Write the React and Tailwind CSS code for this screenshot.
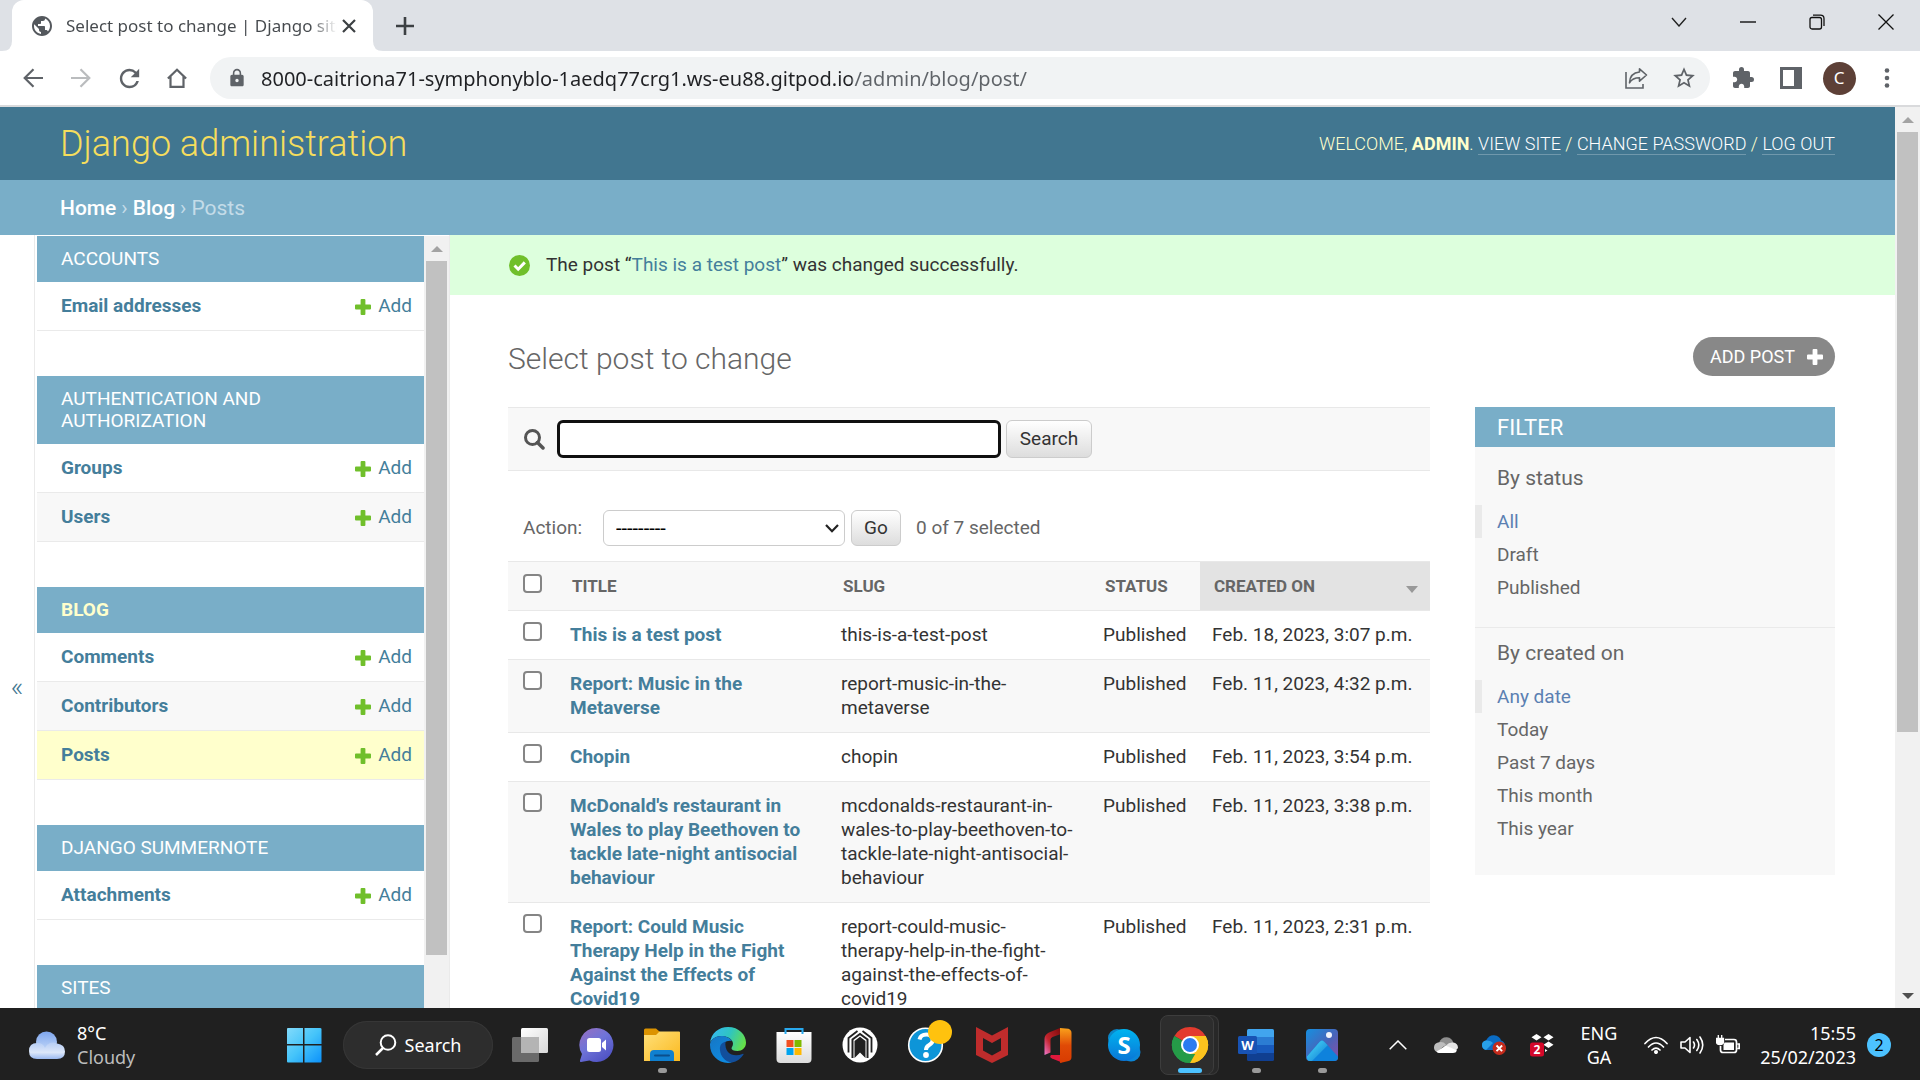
import React from "react";
import { MdExtension, MdStarBorder, MdLock, MdPublic, MdRefresh } from "react-icons/md";

const sections = [
  { name: "Accounts", items: [{ name: "Email addresses" }] },
  { name: "Authentication and Authorization", items: [{ name: "Groups" }, { name: "Users", alt: true }] },
  {
    name: "Blog",
    current: true,
    items: [{ name: "Comments" }, { name: "Contributors", alt: true }, { name: "Posts", current: true }],
  },
  { name: "Django Summernote", items: [{ name: "Attachments" }] },
  { name: "Sites", items: [] },
];

const posts = [
  ["This is a test post", "this-is-a-test-post", "Feb. 18, 2023, 3:07 p.m."],
  ["Report: Music in the Metaverse", "report-music-in-the-metaverse", "Feb. 11, 2023, 4:32 p.m."],
  ["Chopin", "chopin", "Feb. 11, 2023, 3:54 p.m."],
  [
    "McDonald's restaurant in Wales to play Beethoven to tackle late-night antisocial behaviour",
    "mcdonalds-restaurant-in-wales-to-play-beethoven-to-tackle-late-night-antisocial-behaviour",
    "Feb. 11, 2023, 3:38 p.m.",
  ],
  [
    "Report: Could Music Therapy Help in the Fight Against the Effects of Covid19",
    "report-could-music-therapy-help-in-the-fight-against-the-effects-of-covid19",
    "Feb. 11, 2023, 2:31 p.m.",
  ],
];

function Plus({ className }) {
  return (
    <svg viewBox="0 0 16 16" className={className} fill="currentColor" aria-hidden="true">
      <path d="M6.6 0h2.8q1 0 1 1v4.600H15q1 0 1 1v2.800q0 1-1 1h-4.600V15q0 1-1 1H6.600q-1 0-1-1v-4.600H1q-1 0-1-1V6.600q0-1 1-1h4.600V1q0-1 1-1z" />
    </svg>
  );
}

function IconButton({ label, className = "w-12", children }) {
  return (
    <button type="button" aria-label={label} className={`flex h-full shrink-0 items-center justify-center ${className}`}>
      {children}
    </button>
  );
}

function TabStrip() {
  return (
    <div className="flex h-[51px] shrink-0 bg-[#dee1e6] pl-3">
      <div className="relative flex w-[361px] items-center rounded-t-xl bg-white pl-[18px] pr-3">
        <svg viewBox="0 0 10 10" className="absolute bottom-0 -left-2.5 size-2.5 fill-white" aria-hidden="true">
          <path d="M10 0v10H0Q10 10 10 0z" />
        </svg>
        <svg viewBox="0 0 10 10" className="absolute -right-2.5 bottom-0 size-2.5 fill-white" aria-hidden="true">
          <path d="M0 0v10h10Q0 10 0 0z" />
        </svg>
        <MdPublic className="size-6 shrink-0 text-[#54585d]" />
        <span className="ml-3 flex-1 overflow-hidden whitespace-nowrap bg-[linear-gradient(to_right,#45494d_90%,transparent)] bg-clip-text text-[17px] text-transparent">
          Select post to change | Django site
        </span>
        <button type="button" aria-label="Close tab" className="flex size-6 items-center justify-center">
          <svg viewBox="0 0 14 14" className="size-3.5" stroke="#3c4043" strokeWidth="2.200" aria-hidden="true">
            <path d="M1 1l12 12M13 1L1 13" />
          </svg>
        </button>
      </div>
      <IconButton label="New tab" className="ml-2 w-12">
        <svg viewBox="0 0 18 18" className="size-[18px]" stroke="#3c4043" strokeWidth="2.600" aria-hidden="true">
          <path d="M9 0v18M0 9h18" />
        </svg>
      </IconButton>
      <div className="ml-auto flex h-[43px]">
        <IconButton label="Search tabs" className="w-[69px]">
          <svg viewBox="0 0 16 10" className="h-2.5 w-4" fill="none" stroke="#222" strokeWidth="1.400">
            <path d="M1 1l7 8 7-8" />
          </svg>
        </IconButton>
        <IconButton label="Minimize" className="w-[69px]">
          <svg viewBox="0 0 16 2" className="h-0.5 w-4" stroke="#000" strokeWidth="1.300">
            <path d="M0 1h16" />
          </svg>
        </IconButton>
        <IconButton label="Restore" className="w-[69px]">
          <svg viewBox="0 0 16 16" className="size-4" fill="none" stroke="#111" strokeWidth="1.300">
            <rect x="1" y="3.500" width="11.500" height="11.500" rx="2" />
            <path d="M4 1.200h7.500q3.500 0 3.500 3.500V12" />
          </svg>
        </IconButton>
        <IconButton label="Close" className="w-[69px]">
          <svg viewBox="0 0 16 16" className="size-4" stroke="#111" strokeWidth="1.300">
            <path d="M.5.5l15 15M15.500.5l-15 15" />
          </svg>
        </IconButton>
      </div>
    </div>
  );
}

function AddressBar() {
  return (
    <div className="flex h-14 shrink-0 items-center border-b-2 border-[#d9dadc] bg-white px-[9px]">
      <IconButton label="Back">
        <svg viewBox="0 0 20 20" className="size-5" fill="none" stroke="#5f6368" strokeWidth="2.200">
          <path d="M20 10H2M10.500 1.200L1.700 10l8.800 8.800" />
        </svg>
      </IconButton>
      <IconButton label="Forward">
        <svg viewBox="0 0 20 20" className="size-5" fill="none" stroke="#babcbe" strokeWidth="2.200">
          <path d="M0 10h18M9.500 1.200l8.800 8.800-8.800 8.800" />
        </svg>
      </IconButton>
      <IconButton label="Reload">
        <MdRefresh className="size-[29px] text-[#5f6368]" />
      </IconButton>
      <IconButton label="Home">
        <svg viewBox="0 0 20 20" className="size-5" fill="none" stroke="#5f6368" strokeWidth="2.200">
          <path d="M.9 10.500L10 1.700l9.100 8.800M3.500 8.500v10.300h13V8.500" />
        </svg>
      </IconButton>
      <div className="ml-[9px] flex h-[42px] flex-1 items-center rounded-full bg-[#f1f3f4] pl-[17px] pr-0.5">
        <MdLock className="size-5 shrink-0 text-[#5f6368]" />
        <input
          type="text"
          aria-label="Address and search bar"
          defaultValue="8000-caitriona71-symphonyblo-1aedq77crg1.ws-eu88.gitpod.io/admin/blog/post/"
          className="ml-3.5 h-full min-w-0 flex-1 bg-[linear-gradient(to_right,#202124_591px,#5f6368_591px)] bg-clip-text text-[20px] text-transparent outline-none"
        />
        <IconButton label="Share">
          <svg viewBox="0 0 24 22" className="h-[22px] w-6" fill="none" stroke="#5f6368" strokeWidth="1.600">
            <path d="M2 5v16h17v-4" />
            <path d="M15.500 1.800l7 6.200-7 6.200v-3.400q-7 0-10 5Q6 5.800 15.500 5z" strokeLinejoin="round" />
          </svg>
        </IconButton>
        <IconButton label="Bookmark this page">
          <MdStarBorder className="size-[26px] text-[#5f6368]" />
        </IconButton>
      </div>
      <IconButton label="Extensions" className="ml-[9px] w-12">
        <MdExtension className="size-6 text-[#5f6368]" />
      </IconButton>
      <IconButton label="Side panel">
        <span className="block size-[22px] border-[3px] border-r-8 border-[#5f6368]" />
      </IconButton>
      <IconButton label="Profile">
        <span className="flex size-[33px] items-center justify-center rounded-full bg-[#5d4037] text-[17px] text-white">C</span>
      </IconButton>
      <IconButton label="Menu">
        <svg viewBox="0 0 6 20" className="h-5 w-1.5 fill-[#5f6368]">
          <circle cx="3" cy="2.500" r="2.300" />
          <circle cx="3" cy="10" r="2.300" />
          <circle cx="3" cy="17.500" r="2.300" />
        </svg>
      </IconButton>
    </div>
  );
}

function SiteHeader() {
  return (
    <header>
      <div className="flex h-[73px] items-center justify-between bg-[#417690] px-[60px]">
        <a href="#admin" className="text-[36px] font-light leading-[44px] text-[#f5dd5d]">
          Django administration
        </a>
        <div className="text-[18px] font-light leading-[22px] text-[#ffffcc]">
          WELCOME, <strong className="font-bold">ADMIN</strong>.{" "}
          <a href="#site" className="border-b border-white/25 text-white">VIEW SITE</a> /{" "}
          <a href="#password" className="border-b border-white/25 text-white">CHANGE PASSWORD</a> /{" "}
          <a href="#logout" className="border-b border-white/25 text-white">LOG OUT</a>
        </div>
      </div>
      <nav aria-label="Breadcrumbs" className="flex h-[55px] items-center gap-[5px] bg-[#79aec8] px-[60px] pt-0.5 text-[21px] text-[#c4dce8]">
        <a href="#home" className="font-medium text-white">Home</a>
        <span>›</span>
        <a href="#blog" className="font-medium text-white">Blog</a>
        <span>›</span>
        <span>Posts</span>
      </nav>
    </header>
  );
}

function Sidebar() {
  return (
    <aside className="flex h-[calc(100vh-179px)] w-[450px] shrink-0 border-r border-[#eaeaea]">
      <button
        type="button"
        aria-label="Toggle navigation"
        className="w-[35px] shrink-0 border-r border-[#eaeaea] pt-0.5 text-[28px] font-light text-[#417690]"
      >
        «
      </button>
      <nav aria-label="Models" className="ml-0.5 mt-px min-w-0 flex-1 overflow-hidden">
        {sections.map((s) => (
          <section key={s.name} className="mb-[45px]">
            <h2
              className={`bg-[#79aec8] py-3 pl-6 pr-36 text-[19px] uppercase leading-[22px] ${
                s.current ? "font-bold text-[#ffffcc]" : "font-normal text-white"
              }`}
            >
              {s.name}
            </h2>
            {s.items.map((i) => (
              <div
                key={i.name}
                className={`flex h-[49px] items-center border-b border-[#eaeaea] pl-6 pr-3 pt-px text-[19px] ${
                  i.current ? "bg-[#ffffcc]" : i.alt ? "bg-[#f8f8f8]" : "bg-white"
                }`}
              >
                <a href={`#${i.name}`} className="font-bold text-[#447e9b]">{i.name}</a>
                <a href={`#add-${i.name}`} className="ml-auto flex items-center gap-[7px] text-[#447e9b]">
                  <Plus className="size-4 text-[#70bf2b]" />
                  Add
                </a>
              </div>
            ))}
          </section>
        ))}
      </nav>
      <div className="mt-px flex w-[25px] shrink-0 flex-col items-center bg-[#f1f1f1]">
        <span className="flex h-[25px] items-center">
          <svg viewBox="0 0 12 6" className="h-1.5 w-3 fill-[#a3a3a3]"><path d="M0 6l6-6 6 6z" /></svg>
        </span>
        <span className="h-[694px] w-[21px] bg-[#c1c1c1]" />
      </div>
    </aside>
  );
}

function CheckBox({ label }) {
  return (
    <input
      type="checkbox"
      aria-label={label}
      className="block size-[19px] appearance-none rounded-[4px] border-2 border-[#858585] bg-white checked:bg-[#417690]"
    />
  );
}

function ChangeList() {
  const btn =
    "rounded-md border border-[#cccccc] bg-linear-to-b from-white to-[#dddddd] text-[19px] text-[#333333]";
  return (
    <div className="min-w-0 flex-1">
      <form className="flex h-16 items-center border-y border-[#e8e8e8] bg-[#f8f8f8] pl-4" onSubmit={(e) => e.preventDefault()}>
        <label htmlFor="searchbar" className="mr-3" aria-label="Search posts">
          <svg viewBox="0 0 21 21" className="size-[21px]" fill="none" stroke="#555" strokeWidth="3" aria-hidden="true">
            <circle cx="8.500" cy="8.500" r="7" />
            <path d="M13.500 13.500l5.500 5.500" strokeWidth="3.500" strokeLinecap="round" />
          </svg>
        </label>
        <input id="searchbar" type="text" className="h-[38px] w-[444px] rounded-md border-[3px] border-[#101010] bg-white px-2 text-[19px] outline-none" />
        <button type="submit" className={`${btn} ml-[5px] h-[38px] w-[86px]`}>Search</button>
      </form>

      <div className="flex items-center pb-[15px] pl-[15px] pt-[39px] text-[19px] text-[#666666]">
        <label htmlFor="action" className="w-20">Action:</label>
        <div className="relative">
          <select id="action" className="h-9 w-[242px] appearance-none rounded-md border border-[#cccccc] bg-white px-3 text-[20px] text-black">
            <option>---------</option>
            <option>Delete selected posts</option>
          </select>
          <svg viewBox="0 0 14 9" className="pointer-events-none absolute right-1.5 top-3.5 h-[9px] w-3.5" fill="none" stroke="#222" strokeWidth="2.200">
            <path d="M1 1l6 6.200L13 1" />
          </svg>
        </div>
        <button type="button" className={`${btn} ml-1.5 h-9 w-[50px]`}>Go</button>
        <span className="ml-[15px]">0 of 7 selected</span>
      </div>

      <table className="w-full table-fixed border-collapse text-left text-[19px] leading-6 text-[#333333]">
        <colgroup>
          <col className="w-[50px]" />
          <col />
          <col className="w-[262px]" />
          <col className="w-[109px]" />
          <col className="w-[230px]" />
        </colgroup>
        <thead>
          <tr className="h-[49px] border-y border-[#e8e8e8] bg-[#f8f8f8] text-[17px] uppercase text-[#666666]">
            <th className="pb-1.5 pl-[15px]"><CheckBox label="Select all posts" /></th>
            <th className="pl-3.5"><a href="#sort-title">Title</a></th>
            <th className="pl-3.5"><a href="#sort-slug">Slug</a></th>
            <th className="pl-3.5"><a href="#sort-status">Status</a></th>
            <th className="bg-[#e3e3e3] pl-3.5 pr-3">
              <a href="#sort-created" className="flex items-center justify-between whitespace-nowrap">
                Created on
                <svg viewBox="0 0 12 7" className="mt-1.5 h-[7px] w-3 fill-[#999]"><path d="M0 0h12L6 7z" /></svg>
              </a>
            </th>
          </tr>
        </thead>
        <tbody>
          {posts.map(([title, slug, date]) => (
            <tr key={title} className="border-b border-[#e8e8e8] align-top odd:bg-white even:bg-[#f8f8f8]">
              <td className="pl-[15px] pt-[11px]"><CheckBox label={`Select ${title}`} /></td>
              <th scope="row" className="p-3"><a href={`#${slug}`} className="text-[#447e9b]">{title}</a></th>
              <td className="py-3 pl-3 pr-[18px]">{slug}</td>
              <td className="py-3 pl-3">Published</td>
              <td className="whitespace-nowrap py-3 pl-3">{date}</td>
            </tr>
          ))}
        </tbody>
      </table>
    </div>
  );
}

function FilterGroup({ title, options, className }) {
  return (
    <div className={className}>
      <h3 className="mb-[14px] px-[22px] text-[21px] leading-[26px] text-[#666666]">{title}</h3>
      <ul>
        {options.map((o, n) => (
          <li key={o} className={`border-l-[7px] ${n === 0 ? "border-[#eaeaea]" : "border-transparent"}`}>
            <a href={`#${o}`} className={`block pl-[15px] pt-px text-[19px] leading-8 ${n === 0 ? "text-[#5b80b2]" : "text-[#666666]"}`}>
              {o}
            </a>
          </li>
        ))}
      </ul>
    </div>
  );
}

function Filters() {
  return (
    <aside className="w-[360px] shrink-0 self-start bg-[#f8f8f8]">
      <h2 className="bg-[#79aec8] px-[22px] pt-0.5 text-[22px] leading-[38px] text-white">FILTER</h2>
      <FilterGroup title="By status" options={["All", "Draft", "Published"]} className="border-b border-[#eaeaea] pb-[23px] pt-[18px]" />
      <FilterGroup
        title="By created on"
        options={["Any date", "Today", "Past 7 days", "This month", "This year"]}
        className="pb-[30px] pt-[12px]"
      />
    </aside>
  );
}

function Page() {
  return (
    <div className="flex min-h-0 flex-1 overflow-hidden bg-white font-['Roboto','Liberation_Sans',sans-serif]">
      <div className="min-w-0 flex-1 overflow-hidden">
        <SiteHeader />
        <div className="flex">
          <Sidebar />
          <main className="min-w-0 flex-1">
            <div className="flex h-[60px] items-center gap-4 bg-[#ddffdd] pl-[59px] text-[19px] text-[#333333]">
              <svg viewBox="0 0 21 21" className="size-[21px]" fill="none" aria-hidden="true">
                <circle cx="10.500" cy="10.500" r="10.500" fill="#70bf2b" />
                <path d="M5.500 10.500l3.700 3.700 6.600-6.800" stroke="#fff" strokeWidth="3" />
              </svg>
              <p>
                The post “<a href="#post" className="text-[#447e9b]">This is a test post</a>” was changed successfully.
              </p>
            </div>
            <div className="pl-[58px] pr-[60px] pt-[42px]">
              <div className="mb-[29px] flex h-[41px] items-start justify-between">
                <h1 className="mt-1 text-[30px] font-light leading-9 text-[#666666]">Select post to change</h1>
                <a href="#add" className="flex h-[39px] items-center gap-3 rounded-full bg-[#888888] pl-[17px] pr-3 text-[18px] text-white">
                  ADD POST
                  <Plus className="size-4" />
                </a>
              </div>
              <div className="flex gap-[45px]">
                <ChangeList />
                <Filters />
              </div>
            </div>
          </main>
        </div>
      </div>
      <div className="flex w-[25px] shrink-0 flex-col items-center bg-[#f1f1f1]">
        <span className="flex h-[25px] items-center">
          <svg viewBox="0 0 12 6" className="h-1.5 w-3 fill-[#a3a3a3]"><path d="M0 6l6-6 6 6z" /></svg>
        </span>
        <span className="h-[600px] w-[21px] bg-[#c1c1c1]" />
        <span className="mt-auto flex h-[25px] items-center">
          <svg viewBox="0 0 12 6" className="h-1.5 w-3 fill-[#505050]"><path d="M0 0l6 6 6-6z" /></svg>
        </span>
      </div>
    </div>
  );
}

function CloudIcon() {
  return (
    <svg viewBox="0 0 36 28" className="h-7 w-9" aria-hidden="true">
      <defs>
        <linearGradient id="cl1" x1="0" y1="0" x2="0" y2="1"><stop stopColor="#7ea6ee" /><stop offset="1" stopColor="#c9dcf8" /></linearGradient>
        <linearGradient id="cl2" x1="0" y1="0" x2="0" y2="1"><stop stopColor="#b6cdf5" /><stop offset=".6" stopColor="#dce7f9" /><stop offset="1" stopColor="#9ab9f0" /></linearGradient>
      </defs>
      <circle cx="17.500" cy="11" r="10.500" fill="url(#cl1)" />
      <path d="M8 12a8 8 0 0 1 8 5 8.500 8.500 0 0 1 12-4.500q8 1 8 8 0 7.500-8 7.500H8q-8 0-8-8t8-8z" fill="url(#cl2)" />
    </svg>
  );
}

const apps = [
  {
    name: "Task view",
    icon: (
      <>
        <defs><linearGradient id="tv" x1="0" y1="0" x2="1" y2="1"><stop stopColor="#fff" /><stop offset="1" stopColor="#d8d8d8" /></linearGradient></defs>
        <rect x="9" y="1" width="27" height="25" rx="1.500" fill="url(#tv)" />
        <rect x="0" y="10" width="27" height="25" rx="1.500" fill="#6a6a6a" />
        <path d="M9 10h18v16H9z" fill="#b4b4b4" />
      </>
    ),
  },
  {
    name: "Chat",
    icon: (
      <>
        <defs><linearGradient id="ch" x1="0" y1="0" x2=".7" y2="1"><stop stopColor="#9a6fc0" /><stop offset=".5" stopColor="#6f74d8" /><stop offset="1" stopColor="#4f52c4" /></linearGradient></defs>
        <path d="M18.500 1a17 17 0 1 1-7 32.500L3 35q-1.500 0-1-1.500l2-6.500A17 17 0 0 1 18.500 1z" fill="url(#ch)" />
        <rect x="9" y="11" width="14" height="14" rx="2.500" fill="#fff" />
        <path d="M24 16l4-3.500v11L24 20z" fill="#fff" />
      </>
    ),
  },
  {
    name: "File Explorer",
    running: true,
    icon: (
      <>
        <defs><linearGradient id="fe" x1="0" y1="0" x2="1" y2="1"><stop stopColor="#ffe07a" /><stop offset="1" stopColor="#fbb91f" /></linearGradient></defs>
        <path d="M0 3q0-1.500 1.500-1.500H12l4 3.500v6H0z" fill="#dc9300" />
        <path d="M0 8h12l3.500-3.500H35q1 0 1 1V34H0z" fill="url(#fe)" />
        <path d="M6 34V27q0-4 4-4h16q4 0 4 4v7z" fill="#1080d0" />
        <path d="M11 28.500h14" stroke="#0b4f8c" strokeWidth="2" strokeLinecap="round" />
      </>
    ),
  },
  {
    name: "Edge",
    icon: (
      <>
        <defs>
          <linearGradient id="ed1" x1="0" y1=".3" x2="1" y2=".6"><stop stopColor="#35b8f1" /><stop offset=".5" stopColor="#2fc5c0" /><stop offset="1" stopColor="#66e045" /></linearGradient>
          <linearGradient id="ed2" x1="0" y1="0" x2=".6" y2="1"><stop stopColor="#1676c4" /><stop offset="1" stopColor="#0f8ae0" /></linearGradient>
        </defs>
        <path d="M0 16C1 6 9 0 18 0c11 0 18 8 18 15.500C36 21 32 24 27.500 24c-4 0-6-1.500-6-2.800 0-1 1.500-1.700 1.500-4.700C23 12 17 9 11 9 5 9 1 13 0 16z" fill="url(#ed1)" />
        <path d="M0 17C1 12 6 9 11 9c5 0 9 2 11 5-5-1.500-10 2-10 8 0 7 5 12 10 13.500C10 38 0 29 0 18z" fill="url(#ed2)" />
        <path d="M15.500 14.500C11 16 9.500 19 10 23c.5 6 5 12 12 12.500 5-1 9-4 11.500-8 .3-.7-.4-1-1-.6C24 30.500 14 27 15.500 14.500z" fill="#124f9c" />
      </>
    ),
  },
  {
    name: "Microsoft Store",
    icon: (
      <>
        <defs><linearGradient id="ms" x1="0" y1="0" x2="0" y2="1"><stop stopColor="#fff" /><stop offset="1" stopColor="#dcdcdc" /></linearGradient></defs>
        <path d="M.5 5h35v27q0 4-4 4h-27q-4 0-4-4z" fill="url(#ms)" />
        <path d="M9.500 7V2h17v5" fill="none" stroke="#29a9ee" strokeWidth="2" />
        <path d="M10.500 13h7v7h-7z" fill="#f25022" /><path d="M18.500 13h7v7h-7z" fill="#7fba00" />
        <path d="M10.500 21h7v7h-7z" fill="#00a4ef" /><path d="M18.500 21h7v7h-7z" fill="#ffb900" />
      </>
    ),
  },
  {
    name: "Reader",
    icon: (
      <>
        <circle cx="18" cy="18" r="17.500" fill="#fff" />
        <path d="M10.500 31V12.500L18 7l7.500 5.500V31" fill="none" stroke="#222" strokeWidth="2" />
        <path d="M12.500 31V14L18 9.800 23.500 14v17L18 25.500z" fill="#222" />
        <path d="M15.500 4L6.500 11v14.500M20.500 4l9 7v14.500" fill="none" stroke="#222" strokeWidth="1.800" />
      </>
    ),
  },
  {
    name: "Get Help",
    icon: (
      <>
        <circle cx="17.500" cy="18" r="16.800" fill="#0d95d8" stroke="#fff" strokeWidth="1.600" />
        <path d="M11.500 12.500q1-5 7-5t6.200 5.500q0 3-3.500 5-3.200 1.800-3.200 5" fill="none" stroke="#fff" strokeWidth="4" />
        <circle cx="18" cy="28" r="2.900" fill="#fff" />
        <circle cx="32" cy="5" r="12" fill="#ffc20e" />
      </>
    ),
  },
  { name: "McAfee", icon: <path d="M2 0l16 8.500L34 0v28l-16 8-16-8zM9 11v12.500l9 5 9-5V11l-9 5z" fill="#bf2c2c" fillRule="evenodd" /> },
  {
    name: "Office",
    icon: (
      <>
        <defs>
          <linearGradient id="of1" x1="0" y1="0" x2="0" y2="1"><stop stopColor="#f9a11b" /><stop offset=".5" stopColor="#e04a06" /><stop offset="1" stopColor="#d83b01" /></linearGradient>
          <linearGradient id="of2" x1="1" y1="0" x2="0" y2="1"><stop stopColor="#7c0a0a" /><stop offset=".6" stopColor="#c2242c" /><stop offset="1" stopColor="#f07ad0" /></linearGradient>
        </defs>
        <path d="M20 1L9 5.500Q4.500 7.500 4.500 12v16l6-2.500V12.500q0-1.500 2-2.500L21 7z" fill="url(#of2)" />
        <path d="M11 28h11v7.500l-10-4q-3-1.500-1-3.500z" fill="#e0183c" />
        <path d="M20 1l8.500.800Q31.500 3 31.500 6v24q0 3-3 4L20 36z" fill="url(#of1)" />
      </>
    ),
  },
  {
    name: "Skype",
    icon: (
      <>
        <defs><linearGradient id="sk" x1="0" y1="0" x2="0" y2="1"><stop stopColor="#00b4f0" /><stop offset="1" stopColor="#0a76d6" /></linearGradient></defs>
        <circle cx="11" cy="11" r="9" fill="#0b86c8" /><circle cx="25" cy="25" r="9.500" fill="#0a86d8" />
        <circle cx="18" cy="18" r="16" fill="url(#sk)" />
        <text x="18" y="26.500" textAnchor="middle" fontSize="24" fontWeight="700" fill="#fff">S</text>
      </>
    ),
  },
  {
    name: "Chrome",
    active: true,
    icon: (
      <>
        <path d="M18 18L2.400 9A18 18 0 0 1 33.600 9z" fill="#e33b2e" />
        <path d="M18 18l15.600-9A18 18 0 0 1 18 36z" fill="#fcc31e" />
        <path d="M18 18v18A18 18 0 0 1 2.400 9z" fill="#259b48" />
        <path d="M18 9h15.600A18 18 0 0 1 18 36l7.800-13.500z" fill="#fcc31e" />
        <path d="M2.400 9l7.800 13.500 7.800 4.500h5.200L18 36A18 18 0 0 1 2.400 9z" fill="#259b48" />
        <circle cx="18" cy="18" r="9" fill="#fff" /><circle cx="18" cy="18" r="7" fill="#2b7bf0" />
      </>
    ),
  },
  {
    name: "Word",
    running: true,
    icon: (
      <>
        <path d="M9 3.500Q9 2 10.500 2h24Q36 2 36 3.500V11H9z" fill="#41a5ee" /><path d="M9 10h27v8H9z" fill="#2b7cd3" />
        <path d="M9 18h27v8H9z" fill="#185abd" /><path d="M9 26h27v6.500q0 1.500-1.500 1.500h-24Q9 34 9 32.500z" fill="#103f91" />
        <rect x="0" y="9" width="19" height="18" rx="1.500" fill="#1853b4" />
        <text x="9.500" y="22.500" textAnchor="middle" fontSize="13" fontWeight="700" fill="#fff">W</text>
      </>
    ),
  },
  {
    name: "Photos",
    running: true,
    icon: (
      <>
        <defs>
          <linearGradient id="ph1" x1="0" y1="0" x2="1" y2="1"><stop stopColor="#1590e0" /><stop offset=".55" stopColor="#4a63b8" /><stop offset="1" stopColor="#8a4ea8" /></linearGradient>
          <linearGradient id="ph2" x1="0" y1="0" x2="1" y2="1"><stop stopColor="#4de0fa" /><stop offset="1" stopColor="#0d78d4" /></linearGradient>
        </defs>
        <rect x="2" y="2" width="32" height="32" rx="4" fill="url(#ph1)" />
        <path d="M2.500 30L15.500 15q2.500-3 5 0L34 29.500v1q0 3.500-4 3.500H6q-3 0-3.500-4z" fill="#0e82dc" />
        <path d="M3 29.500L15.500 15q2.500-3 5 0l3.200 3.300L8 34H6q-3.500-.5-3-4.500z" fill="url(#ph2)" />
        <circle cx="25" cy="8" r="3" fill="#f2f4fb" />
      </>
    ),
  },
];

function Taskbar() {
  return (
    <footer className="flex h-[72px] shrink-0 items-center bg-[#202020] pr-[29px] pt-px text-[18px] leading-6 text-white">
      <div className="flex w-[271px] items-center gap-3 pl-[29px]">
        <CloudIcon />
        <div>
          <div>8°C</div>
          <div className="text-[#bdbdbd]">Cloudy</div>
        </div>
      </div>
      <IconButton label="Start" className="w-[66px]">
        <svg viewBox="0 0 36 36" className="size-9">
          <defs><linearGradient id="wn" gradientUnits="userSpaceOnUse" x1="0" y1="0" x2="36" y2="36"><stop stopColor="#86dcfb" /><stop offset=".5" stopColor="#45c4fa" /><stop offset="1" stopColor="#0a90fa" /></linearGradient></defs>
          <path d="M2 1h15v16H1V2q0-1 1-1zM18.500 1H34q1.500 0 1.500 1v15h-17zM1 18.500h16V35.500H2q-1 0-1-1zM18.500 18.500h17v16q0 1-1 1h-16z" fill="url(#wn)" />
        </svg>
      </IconButton>
      <button type="button" className="ml-1.5 mr-1 flex h-12 w-[150px] items-center justify-center gap-2 rounded-full bg-[#2d2d2d] ring-1 ring-inset ring-[#363636]">
        <svg viewBox="0 0 22 22" className="size-[22px]" fill="none" stroke="#fff" strokeWidth="2">
          <circle cx="13" cy="8.500" r="7.300" /><path d="M8 14l-7 7" strokeWidth="2.500" />
        </svg>
        Search
      </button>
      {apps.map((a) => (
        <button key={a.name} type="button" aria-label={a.name} className="relative flex h-[60px] w-[66px] shrink-0 items-center justify-center">
          {a.active && <span className="absolute left-[46px] top-0 h-[60px] w-4 rounded-r-lg border border-l-0 border-[#3a3a3a] bg-[#282828]" />}
          {a.active && <span className="absolute left-[3px] top-0 h-[60px] w-[54px] rounded-lg border border-[#3d3d3d] bg-[#2d2d2d]" />}
          <svg viewBox="0 0 36 36" className="relative size-9 overflow-visible font-['Open_Sans',sans-serif]">{a.icon}</svg>
          {a.running && <span className="absolute bottom-0.5 left-[29px] h-[5px] w-[9px] rounded-full bg-[#9a9a9a]" />}
          {a.active && <span className="absolute bottom-0.5 left-[21px] h-[5px] w-6 rounded-full bg-[#4cc2ff]" />}
        </button>
      ))}
      <div className="ml-auto flex h-full items-center">
        <IconButton label="Show hidden icons">
          <svg viewBox="0 0 18 10" className="h-2.5 w-[18px]" fill="none" stroke="#fff" strokeWidth="1.500"><path d="M.7 9.300L9 1l8.300 8.300" /></svg>
        </IconButton>
        <IconButton label="OneDrive personal">
          <svg viewBox="0 0 24 16" className="h-4 w-6">
            <path d="M5 6Q7 0 13 .3 18 1 19.500 6L12 11z" fill="#8e8e8e" />
            <path d="M4 5.500q5-1.500 8 2L3 15Q0 13.500 0 10.500q0-4 4-5z" fill="#bdbdbd" />
            <path d="M19 5.500q5 .5 5 5.500l-3 3.500-9-6q3-3.500 7-3z" fill="#e4e4e4" />
            <path d="M2.500 14.500L12 8.500l11 5Q22 16 19 16H5q-1.500 0-2.500-1.500z" fill="#fff" />
          </svg>
        </IconButton>
        <IconButton label="OneDrive">
          <svg viewBox="0 0 24 20" className="h-5 w-6">
            <path d="M4 5.500Q7 0 12 .3q6 .7 7 5.200 4 1 4 5.500 0 4-4 4H5q-5 0-5-5 0-3.500 4-4.500z" fill="#0a6cc4" />
            <path d="M0 10q0-4 4-4.500 5-.5 7 2.500l-7 7Q0 14 0 10z" fill="#28a0e8" />
            <circle cx="17.300" cy="13.300" r="6.700" fill="#c42b1c" />
            <path d="M14.500 10.500l5.600 5.600m0-5.600l-5.600 5.600" stroke="#fff" strokeWidth="1.900" />
          </svg>
        </IconButton>
        <IconButton label="Dropbox, 2 notifications">
          <svg viewBox="0 0 24 24" className="h-6 w-6 font-['Open_Sans',sans-serif]">
            <path d="M6.500 1l5 3.300-5 3.300-5-3.300zM18.500 1l5 3.300-5 3.300-5-3.300zM18.500 8.500l5 3.300-5 3.300-5-3.300zM15 16l2.500 1.500L15 19z" fill="#fff" />
            <rect x="0" y="9.500" width="14" height="14" rx="2.500" fill="#d4082a" />
            <text x="7" y="21" textAnchor="middle" fontSize="12" fontWeight="700" fill="#fff">2</text>
          </svg>
        </IconButton>
        <button type="button" className="mr-1.5 w-[66px] text-center">ENG<br />GA</button>
        <IconButton label="Wi-Fi" className="w-9">
          <svg viewBox="0 0 24 18" className="h-[18px] w-6" fill="none" stroke="#fff" strokeWidth="1.700" strokeLinecap="round">
            <path d="M1 7.500q11-12 22 0M4.500 11q7.500-8 15 0M8 14q4-4 8 0" /><circle cx="12" cy="16" r="1.200" fill="#fff" />
          </svg>
        </IconButton>
        <IconButton label="Volume" className="w-9">
          <svg viewBox="0 0 24 20" className="h-5 w-6" fill="none" stroke="#fff" strokeWidth="1.600" strokeLinecap="round">
            <path d="M1 7v6h4l5 4.500v-15L5 7zM13.500 7q2 3 0 6M16.800 4.500q4 5.500 0 11M20 2q5.500 8 0 16" strokeLinejoin="round" />
          </svg>
        </IconButton>
        <IconButton label="Battery" className="w-9">
          <svg viewBox="0 0 24 20" className="h-5 w-6" fill="none" stroke="#fff" strokeWidth="1.700">
            <path d="M9 4.500h9q2.500 0 2.500 2.500v8q0 2.500-2.500 2.500H7Q4.500 17.500 4.500 15v-4M21.500 9h1.700v4.500h-1.700" />
            <path d="M8.500 7.500h9.500v7.500H7.500v-5z" fill="#fff" stroke="none" />
            <path d="M.5 3.500h7v3.500q0 2.500-3.500 2.500T.5 7zM2.300 0v4M5.700 0v4" fill="#fff" strokeWidth="1.300" />
          </svg>
        </IconButton>
        <button type="button" className="w-[110px] text-right">15:55<br />25/02/2023</button>
        <span className="ml-[11px] flex size-6 items-center justify-center rounded-full bg-[#4cc2ff] text-[16px] text-black">2</span>
      </div>
    </footer>
  );
}

export default function App() {
  return (
    <div className="flex h-screen flex-col overflow-hidden font-['Noto_Sans','Open_Sans',sans-serif]">
      <TabStrip />
      <AddressBar />
      <Page />
      <Taskbar />
    </div>
  );
}
